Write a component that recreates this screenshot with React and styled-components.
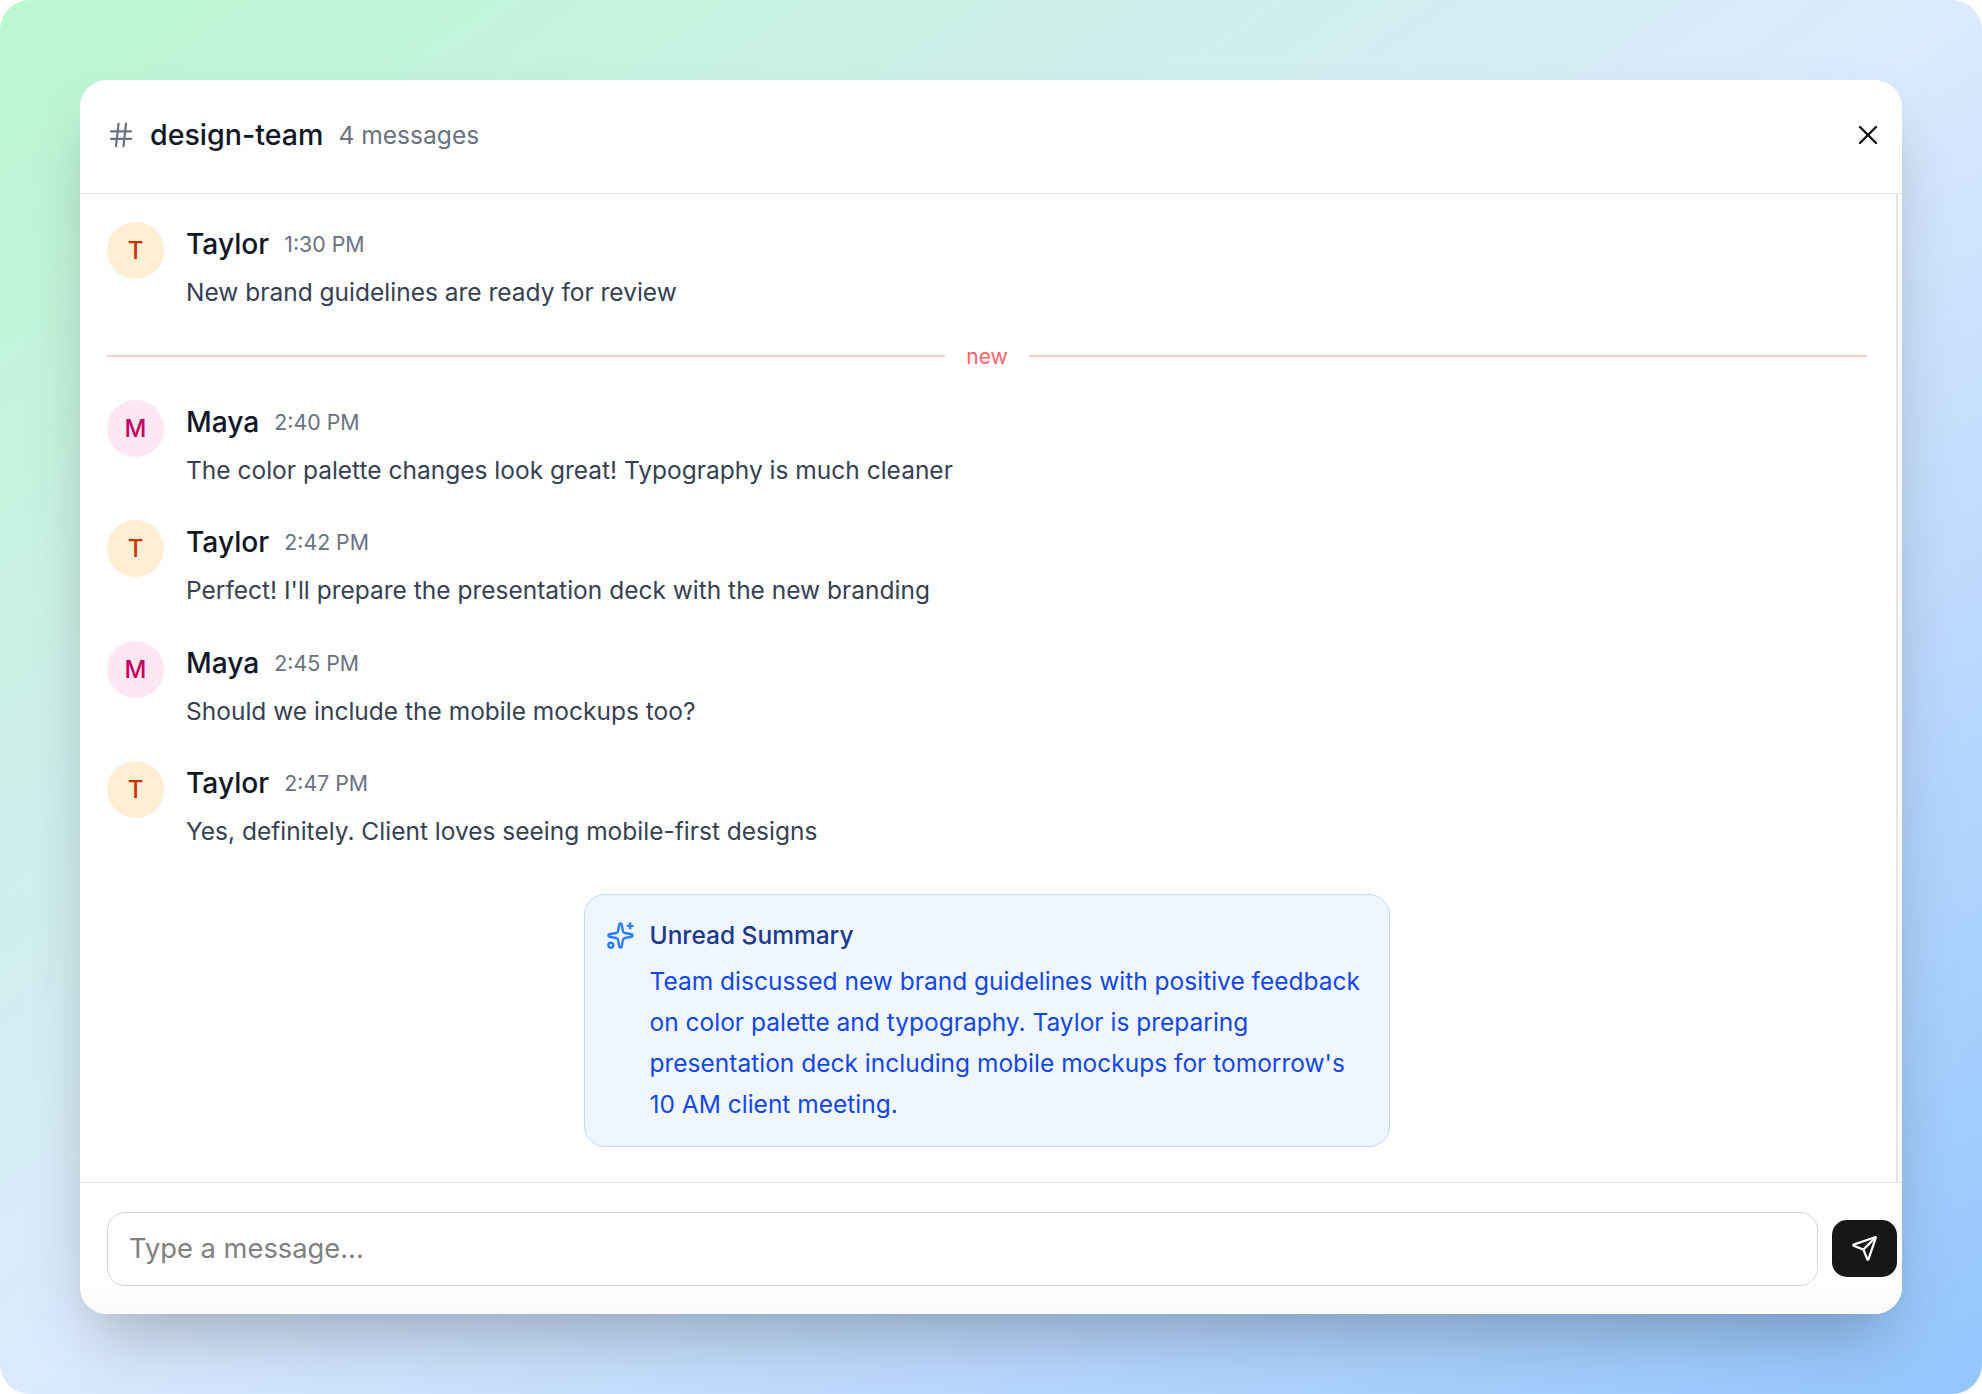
import React from "react";
import styled, { createGlobalStyle } from "styled-components";
import { Hash, X, Sparkles, Send } from "lucide-react";

const messages = [
  { name: "Taylor", time: "1:30 PM", text: "New brand guidelines are ready for review" },
  { divider: true },
  { name: "Maya", time: "2:40 PM", text: "The color palette changes look great! Typography is much cleaner" },
  { name: "Taylor", time: "2:42 PM", text: "Perfect! I'll prepare the presentation deck with the new branding" },
  { name: "Maya", time: "2:45 PM", text: "Should we include the mobile mockups too?" },
  { name: "Taylor", time: "2:47 PM", text: "Yes, definitely. Client loves seeing mobile-first designs" },
];

export default function App() {
  return (
    <>
      <GlobalStyle />
      <Page>
        <Card>
          <Header>
            <Hash size={30} color="#6a7282" strokeWidth={1.8} />
            <Title>design-team</Title>
            <Count>4 messages</Count>
            <CloseButton>
              <X size={32} strokeWidth={1.8} />
            </CloseButton>
          </Header>
          <Body>
            <Content>
              <Feed>
                {messages.map((m, i) =>
                  m.divider ? (
                    <Divider key={i}>
                      <DividerLabel>new</DividerLabel>
                    </Divider>
                  ) : (
                    <Message key={i}>
                      <Avatar who={m.name}>{m.name[0]}</Avatar>
                      <Column>
                        <Meta>
                          <Name>{m.name}</Name>
                          <Time>{m.time}</Time>
                        </Meta>
                        <Text>{m.text}</Text>
                      </Column>
                    </Message>
                  )
                )}
              </Feed>
              <Summary>
                <SummaryIcon>
                  <Sparkles size={29} color="#2b7fff" strokeWidth={2} />
                </SummaryIcon>
                <div>
                  <SummaryTitle>Unread Summary</SummaryTitle>
                  <SummaryText>
                    Team discussed new brand guidelines with positive feedback
                    on color palette and typography. Taylor is preparing
                    presentation deck including mobile mockups for tomorrow's
                    10 AM client meeting.
                  </SummaryText>
                </div>
              </Summary>
            </Content>
            <ScrollTrack />
          </Body>
          <Footer>
            <Input placeholder="Type a message..." />
            <SendButton>
              <Send size={27} color="#fff" strokeWidth={2} />
            </SendButton>
          </Footer>
        </Card>
      </Page>
    </>
  );
}

const GlobalStyle = createGlobalStyle`
  html, body {
    margin: 0;
    background: #fff;
  }
  * {
    box-sizing: border-box;
  }
  body {
    font-family: "Inter", "Liberation Sans", sans-serif;
  }
`;

const Page = styled.div`
  width: 1982px;
  height: 1394px;
  padding: 80px;
  border-radius: 30px;
  background: linear-gradient(to bottom right, #bbf7d0 0%, #dbeafe 50%, #93c5fd 100%);
`;

const Card = styled.div`
  width: 1822px;
  height: 1234px;
  display: flex;
  flex-direction: column;
  background: #fff;
  border-radius: 27px;
  overflow: hidden;
  box-shadow: 0 34px 66px -16px rgba(0, 0, 0, 0.27);
`;

const Header = styled.div`
  height: 114px;
  flex: none;
  display: flex;
  align-items: center;
  padding: 0 18px 4px 26px;
  border-bottom: 1.5px solid #e5e7eb;
`;

const Title = styled.span`
  margin-left: 14px;
  font-size: 28.6px;
  font-weight: 500;
  color: #101828;
`;

const Count = styled.span`
  margin-left: 15px;
  font-size: 24.6px;
  color: #6a7282;
`;

const CloseButton = styled.div`
  margin-left: auto;
  display: flex;
  color: #111;
`;

const Body = styled.div`
  flex: 1;
  min-height: 0;
  display: flex;
`;

const Content = styled.div`
  flex: 1;
  display: flex;
  flex-direction: column;
  padding: 28px 29px 0 27px;
`;

const ScrollTrack = styled.div`
  width: 6px;
  flex: none;
  background: #fafafa;
  border-left: 2px solid #e5e5e5;
`;

const Feed = styled.div`
  display: flex;
  flex-direction: column;
  gap: 32.4px;
`;

const Message = styled.div`
  display: flex;
  gap: 22px;
`;

const Avatar = styled.div`
  width: 57px;
  height: 57px;
  flex: none;
  border-radius: 50%;
  display: flex;
  align-items: center;
  justify-content: center;
  font-size: 24px;
  font-weight: 500;
  background: ${(p) => (p.who === "Maya" ? "#fce7f3" : "#ffedd4")};
  color: ${(p) => (p.who === "Maya" ? "#c6005c" : "#ca3500")};
`;

const Column = styled.div`
  display: flex;
  flex-direction: column;
  padding-top: 4px;
  gap: 12px;
`;

const Meta = styled.div`
  display: flex;
  align-items: center;
  gap: 15px;
`;

const Name = styled.span`
  font-size: 28.2px;
  font-weight: 500;
  color: #101828;
  line-height: 36px;
`;

const Time = styled.span`
  font-size: 21.3px;
  color: #6a7282;
`;

const Text = styled.div`
  font-size: 24.5px;
  line-height: 36px;
  color: #364153;
`;

const Divider = styled.div`
  display: flex;
  align-items: center;
  justify-content: center;
  height: 2px;
  background: #ffc9c9;
  margin: 13px 0 10px;
`;

const DividerLabel = styled.span`
  padding: 0 21px;
  background: #fff;
  font-size: 21px;
  color: #ff6467;
`;

const Summary = styled.div`
  width: 806px;
  height: 253px;
  margin: 45.5px auto 0;
  padding: 22px 26px 0 21px;
  display: flex;
  gap: 14.5px;
  background: #eff6ff;
  border: 1.5px solid #bedbff;
  border-radius: 21px;
`;

const SummaryIcon = styled.div`
  flex: none;
  display: flex;
  height: 36px;
  align-items: center;
`;

const SummaryTitle = styled.div`
  font-size: 24.5px;
  font-weight: 500;
  line-height: 36px;
  color: #1c398e;
`;

const SummaryText = styled.div`
  margin-top: 8px;
  font-size: 24.5px;
  line-height: 41px;
  color: #1447e6;
`;

const Footer = styled.div`
  height: 132px;
  flex: none;
  display: flex;
  align-items: center;
  gap: 14px;
  padding: 0 5px 0 27px;
  border-top: 1.5px solid #e5e7eb;
  background: linear-gradient(#fff 75%, #fafafa);
`;

const Input = styled.input`
  flex: 1;
  height: 74px;
  padding: 0 21px;
  border: 1.5px solid #d1d5dc;
  border-radius: 18px;
  background: transparent;
  font-family: inherit;
  font-size: 27.3px;
  outline: none;
  &::placeholder {
    color: #808080;
  }
`;

const SendButton = styled.div`
  width: 65px;
  height: 57px;
  flex: none;
  display: flex;
  align-items: center;
  justify-content: center;
  background: #171717;
  border-radius: 15px;
`;
